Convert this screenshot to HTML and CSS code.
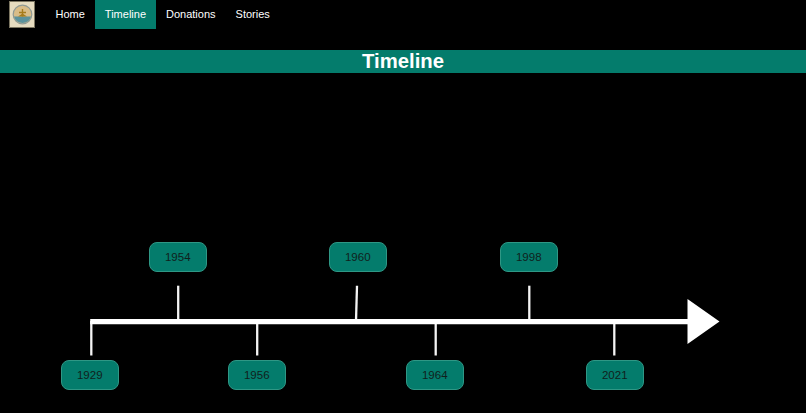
FILE: index.html
```html
<!DOCTYPE html>
<html lang="en">
<head>
<meta charset="utf-8">
<title>Timeline</title>
<link rel="stylesheet" href="styles.css">
</head>
<body>
<nav class="nav">
  <a class="logo" href="#" aria-label="Home">
    <svg viewBox="0 0 26 27" width="26" height="27">
      <rect x="0.500" y="0.500" width="25" height="26" fill="#e6dcc0" stroke="#7c7662"/>
      <circle cx="13.500" cy="13.500" r="9.300" fill="#d9bd88" stroke="#8f9a94" stroke-width="1.200"/>
      <path d="M5 15.500h17a8.800 8.800 0 0 1-17 0z" fill="#5b929c"/>
      <path d="M13.500 8v7.500M10 11.500h7" stroke="#a67c1c" stroke-width="1.400"/>
      <path d="M9 15.500l4.500-3 4.500 3z" fill="#a67c1c"/>
    </svg>
  </a>
  <ul class="menu">
    <li><a href="#">Home</a></li>
    <li><a class="active" href="#">Timeline</a></li>
    <li><a href="#">Donations</a></li>
    <li><a href="#">Stories</a></li>
  </ul>
</nav>
<h1 class="title">Timeline</h1>
<main class="stage">
  <svg class="axis" width="806" height="340" viewBox="0 73 806 340" aria-hidden="true">
    <g stroke="#f4f4f4" stroke-width="2.300" fill="none">
      <path d="M91.300 355.500V321"/>
      <path d="M178.200 285.700V321"/>
      <path d="M257.200 355.500V321"/>
      <path d="M357 285.700L356 321"/>
      <path d="M435.700 355.500V321"/>
      <path d="M529.300 285.700V321"/>
      <path d="M614.300 355.500V321"/>
    </g>
    <path d="M90.200 319H687.500V299L719.500 321.500L687.500 344V324.200H90.200z" fill="#fff"/>
  </svg>
  <div class="year" style="left:61px;top:287px">1929</div>
  <div class="year" style="left:149px;top:169px">1954</div>
  <div class="year" style="left:228px;top:287px">1956</div>
  <div class="year" style="left:329px;top:169px">1960</div>
  <div class="year" style="left:406px;top:287px">1964</div>
  <div class="year" style="left:500px;top:169px">1998</div>
  <div class="year" style="left:586px;top:287px">2021</div>
</main>
</body>
</html>
```
FILE: styles.css
```css
* { box-sizing: border-box; }
html, body { margin: 0; height: 100%; overflow: hidden; }
body { background: #000; color: #fff; font-family: "Liberation Sans", Arial, sans-serif; }
.nav { display: flex; align-items: flex-start; height: 50px; padding-left: 9px; }
.logo { display: block; width: 26px; height: 27px; margin-top: 1px; margin-right: 10.500px; }
.logo svg { display: block; }
.menu { display: flex; list-style: none; margin: 0; padding: 0; }
.menu a { display: block; height: 29px; padding: 0 10px; line-height: 28px; font-size: 11px; color: #fff; text-decoration: none; }
.menu a.active { background: #047c6c; }
.title { margin: 0; height: 23px; background: #047c6c; color: #fff; text-align: center; font-size: 20.300px; line-height: 23px; font-weight: bold; }
.stage { position: relative; height: 340px; }
.axis { position: absolute; left: 0; top: 0; display: block; }
.year { position: absolute; width: 57.500px; height: 29.500px; background: #047c6c; border: 1px solid #2f9785; border-radius: 8px; color: #101f1c; font-size: 11.500px; line-height: 28px; text-align: center; }
```
